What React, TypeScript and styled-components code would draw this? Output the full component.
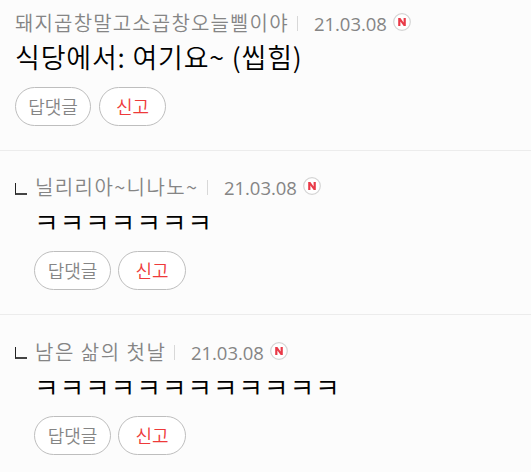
import React from 'react';
import styled, { createGlobalStyle } from 'styled-components';

const Global = createGlobalStyle`
  *{box-sizing:border-box}
  body{margin:0;background:#fcfcfc;font-family:"Noto Sans CJK KR",sans-serif;}
`;
const Page = styled.main`width:531px;height:472px;overflow:hidden;background:#fcfcfc;`;
const Elbow = styled.span`
  flex:none;width:12px;height:12px;margin:9px 7px 0 0;
  border-left:1px solid #222;border-bottom:2px solid #444;
`;
const Comment = styled.article<{ $reply?: boolean; $h: number }>`
  display:flex;height:${p => p.$h}px;
  padding:${p => (p.$reply ? '23px 0 0 15px' : '10px 0 0 15px')};
  border-bottom:1px solid #ececec;
  &:last-child{border-bottom:0;padding-top:24px}
  &:last-child ${Elbow}{margin-top:8px}
`;
const Body = styled.div`flex:1;min-width:0;`;
const Meta = styled.header`display:flex;align-items:center;height:26px;color:#858585;font-size:20px;line-height:26px;white-space:nowrap;`;
const Name = styled.span<{ $w: number; $ls: number; $reply?: boolean }>`
  width:${p => p.$w}px;margin-left:${p => (p.$reply ? 1 : 0)}px;letter-spacing:${p => p.$ls}px;font-weight:350;
`;
const Bar = styled.i`width:1px;height:15px;background:#d8d8d8;margin:0 16px 0 9px;`;
const Time = styled.time`width:73px;padding-top:1px;font-size:18.5px;font-family:"Open Sans","Noto Sans",sans-serif;letter-spacing:-.05px;`;
const Badge = styled.svg`width:18px;height:18px;margin:-3px 0 0 6px;`;
const Text = styled.p<{ $ls: number; $reply?: boolean }>`
  margin:${p => (p.$reply ? 3 : 2)}px 0 0;height:37px;font-size:27px;font-weight:350;line-height:37px;
  color:#000;letter-spacing:${p => p.$ls}px;white-space:nowrap;
`;
const Actions = styled.div<{ $reply?: boolean }>`display:flex;gap:${p => (p.$reply ? 7 : 8)}px;margin-top:${p => (p.$reply ? 11 : 12)}px;`;
const Pill = styled.button<{ $w: number; $red?: boolean }>`
  width:${p => p.$w}px;height:39px;padding:0 0 1px;border:1px solid #bebebe;border-radius:20px;background:#fff;
  font:350 18px "Noto Sans CJK KR",sans-serif;color:${p => (p.$red ? '#ee3a3a' : '#858585')};
`;

type Item = { name: string; w: number; ls: number; date: string; text: string; tls: number; h: number; reply?: boolean };
const items: Item[] = [
  { name: '돼지곱창말고소곱창오늘삘이야', w: 273, ls: 1.15, date: '21.03.08', text: '식당에서: 여기요~ (씹힘)', tls: 0.8, h: 151 },
  { name: '닐리리아~니나노~', w: 163, ls: 1.4, date: '21.03.08', text: 'ㅋㅋㅋㅋㅋㅋㅋ', tls: 0.7, h: 164, reply: true },
  { name: '남은 삶의 첫날', w: 130, ls: 1.5, date: '21.03.08', text: 'ㅋㅋㅋㅋㅋㅋㅋㅋㅋㅋㅋㅋ', tls: 0.7, h: 157, reply: true },
];

export default function App() {
  return (
    <><Global /><Page>
      {items.map(c => (
        <Comment key={c.name} $reply={c.reply} $h={c.h}>
          {c.reply && <Elbow />}
          <Body>
            <Meta><Name $w={c.w} $ls={c.ls} $reply={c.reply}>{c.name}</Name><Bar /><Time>{c.date}</Time>
              <Badge viewBox="0 0 18 18"><circle cx="9" cy="9" r="8.3" fill="#fff" stroke="#d4d4d4" strokeWidth="1.2" /><path d="M5.2 13V5h2.2l3.2 4.5V5h2.2v8h-2.1L7.4 8.5V13z" fill="#e93a48" /></Badge>
            </Meta>
            <Text $ls={c.tls} $reply={c.reply}>{c.text}</Text>
            <Actions $reply={c.reply}><Pill $w={c.reply ? 77 : 76}>답댓글</Pill><Pill $w={c.reply ? 68 : 67} $red>신고</Pill></Actions>
          </Body>
        </Comment>
      ))}
    </Page></>
  );
}
